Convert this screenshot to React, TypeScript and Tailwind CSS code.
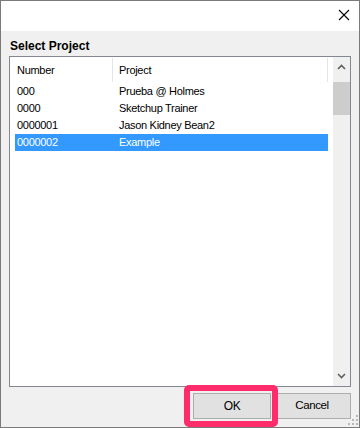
export default function App() {
  const rows = [
    ["000", "Prueba @ Holmes"],
    ["0000", "Sketchup Trainer"],
    ["0000001", "Jason Kidney Bean2"],
    ["0000002", "Example"],
  ];
  const font = { fontFamily: '"Liberation Sans", Arial, sans-serif' };
  return (
    <div
      className="relative w-[360px] h-[428px] border border-[#7a7a7a] bg-[#f0f0f0] flex flex-col text-black"
      style={font}
    >
      {/* title bar */}
      <div className="h-[30px] bg-white flex items-center justify-end pr-[9px] shrink-0">
        <svg width="12" height="12" viewBox="0 0 12 12" className="mt-[-2px]">
          <path d="M1 1 L11 11 M11 1 L1 11" stroke="#000" strokeWidth="1.1" />
        </svg>
      </div>
      {/* label */}
      <div className="h-[25px] pl-[9px] pt-[8px] leading-[14px] text-[12px] font-bold shrink-0">
        Select Project
      </div>
      {/* list box */}
      <div className="ml-[8px] w-[342px] h-[331px] border border-[#828790] bg-white flex shrink-0">
        <div className="flex-1 flex flex-col text-[11px] tracking-[-0.3px]">
          {/* header */}
          <div className="h-[26px] flex items-stretch">
            <div className="w-[102px] pl-[7px] flex items-center">Number</div>
            <div className="w-px bg-[#e5e5e5] my-[1px]" />
            <div className="w-[214px] pl-[6px] flex items-center">Project</div>
            <div className="w-px bg-[#e5e5e5] my-[1px]" />
          </div>
          {rows.map(([n, p], i) => {
            const sel = i === 3;
            return (
              <div
                key={n}
                className={
                  "ml-[5px] w-[313px] h-[17px] flex items-center " +
                  (sel ? "bg-[#3399ff] text-white" : "")
                }
              >
                <div className="w-[98px] pl-[2px]">{n}</div>
                <div className="pl-[6px]">{p}</div>
              </div>
            );
          })}
        </div>
        {/* scrollbar */}
        <div className="w-[17px] bg-[#f0f0f0] flex flex-col">
          <div className="h-[20px] flex items-center justify-center">
            <svg width="9" height="6" viewBox="0 0 9 6">
              <path d="M1 5 L4.5 1.5 L8 5" stroke="#606060" strokeWidth="1.6" fill="none" />
            </svg>
          </div>
          <div className="mt-[5px] h-[33px] bg-[#cdcdcd]" />
          <div className="flex-1" />
          <div className="h-[20px] flex items-center justify-center">
            <svg width="9" height="6" viewBox="0 0 9 6">
              <path d="M1 1 L4.5 4.5 L8 1" stroke="#606060" strokeWidth="1.6" fill="none" />
            </svg>
          </div>
        </div>
      </div>
      {/* buttons */}
      <div className="flex justify-end gap-[2px] pr-[8px] mt-[6px]">
        <button className="w-[78px] h-[26px] border border-[#adadad] bg-[#e1e1e1] text-[12px] tracking-[-0.3px] flex items-center justify-center">
          OK
        </button>
        <button className="w-[78px] h-[26px] border border-[#adadad] bg-[#e1e1e1] text-[11.5px] tracking-[-0.4px] flex items-center justify-center">
          Cancel
        </button>
      </div>
      {/* highlight overlay */}
      <div className="absolute left-[183px] top-[384px] w-[94px] h-[42px] border-[6px] border-[#ff2c6c] rounded-[5px]" />
      {/* size grip */}
      <svg className="absolute right-[1px] bottom-[2px]" width="10" height="10" viewBox="0 0 10 10">
        <rect x="8" y="0" width="2" height="2" fill="#b8b8b8" />
        <rect x="4" y="4" width="2" height="2" fill="#b8b8b8" />
        <rect x="8" y="4" width="2" height="2" fill="#b8b8b8" />
        <rect x="0" y="8" width="2" height="2" fill="#b8b8b8" />
        <rect x="4" y="8" width="2" height="2" fill="#b8b8b8" />
        <rect x="8" y="8" width="2" height="2" fill="#b8b8b8" />
      </svg>
    </div>
  );
}
